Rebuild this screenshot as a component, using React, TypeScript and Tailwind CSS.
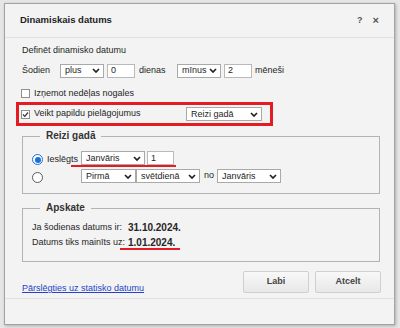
import React from 'react';

const font = { fontFamily: '"Liberation Sans", Arial, sans-serif' };

function Chevron() {
  return (
    <svg width="8" height="5" viewBox="0 0 8 5" className="shrink-0">
      <path d="M1 1l3 3 3-3" fill="none" stroke="#222" strokeWidth="1.7" />
    </svg>
  );
}

function Select({ value, className }: { value: string; className: string }) {
  return (
    <div
      className={`flex items-center justify-between h-[14px] border border-[#a9a9a9] bg-white pl-[4px] pr-[3px] ${className}`}
    >
      <span className="leading-none">{value}</span>
      <Chevron />
    </div>
  );
}

function Input({ value, className }: { value: string; className: string }) {
  return (
    <div
      className={`flex items-center h-[14px] border border-[#b9b9b9] bg-white px-[3px] ${className}`}
    >
      <span className="leading-none">{value}</span>
    </div>
  );
}

function Checkbox({ checked }: { checked?: boolean }) {
  return (
    <div className="w-[9px] h-[9px] border border-[#8f8f8f] bg-white flex items-center justify-center shrink-0">
      {checked && (
        <svg width="7" height="7" viewBox="0 0 7 7">
          <path d="M1 3.5l1.8 1.8L6 1.5" fill="none" stroke="#333" strokeWidth="1.2" />
        </svg>
      )}
    </div>
  );
}

function Radio({ checked }: { checked?: boolean }) {
  return checked ? (
    <div className="w-[11px] h-[11px] rounded-full border border-[#1a6fd9] bg-white flex items-center justify-center shrink-0">
      <div className="w-[6px] h-[6px] rounded-full bg-[#1a6fd9]" />
    </div>
  ) : (
    <div className="w-[11px] h-[11px] rounded-full border border-[#5a5a5a] bg-white shrink-0" />
  );
}

export default function App() {
  return (
    <div
      className="w-[400px] h-[328px] bg-[#e6e6e6] pl-[4px] pt-[3px] overflow-hidden text-[9px] text-[#262626]"
      style={font}
    >
      <div className="w-[391px] h-[322px] border border-[#a3a3a3] bg-[#f3f3f3] shadow-[1px_1px_3px_rgba(0,0,0,0.25)] flex flex-col">
        {/* Header */}
        <div className="h-[34px] shrink-0 border-b border-[#e0e0e0] flex items-center pl-[15px] pr-[15px]">
          <span className="font-bold text-[9.5px] text-[#222]">Dinamiskais datums</span>
          <div className="ml-auto flex items-center gap-[10px] text-[#555] font-bold">
            <span className="text-[9px]">?</span>
            <span className="text-[11px] leading-none">×</span>
          </div>
        </div>

        {/* Body */}
        <div className="h-[260px] shrink-0 pl-[17px] flex flex-col">
          <div className="h-[25px] leading-[25px]">Definēt dinamisko datumu</div>

          <div className="h-[15px] flex items-center">
            <span className="w-[38px]">Šodien</span>
            <Select value="plus" className="w-[44px]" />
            <Input value="0" className="ml-[3px] w-[28px]" />
            <span className="ml-[4px] w-[38px]">dienas</span>
            <Select value="mīnus" className="w-[44px]" />
            <Input value="2" className="ml-[3px] w-[28px]" />
            <span className="ml-[3px]">mēneši</span>
          </div>

          <div className="mt-[7px] h-[17px] flex items-center -ml-[1px] gap-[4px]">
            <Checkbox />
            <span>Izņemot nedēļas nogales</span>
          </div>

          <div className="h-[24px] w-[257px] -ml-[6px] border-[3px] border-[#e31b23] flex items-center pl-[2px]">
            <Checkbox checked />
            <span className="ml-[4px] w-[152px]">Veikt papildu pielāgojumus</span>
            <Select value="Reizi gadā" className="w-[76px]" />
          </div>

          <fieldset className="mt-[3px] w-[358px] border border-[#b3b3b3] pl-[9px] pb-[10px]">
            <legend className="ml-[8px] px-[6px] font-bold text-[10px] leading-[14px] text-[#333]">
              Reizi gadā
            </legend>
            <div className="relative mt-[8px] h-[14px] flex items-end">
              <Radio checked />
              <span className="ml-[4px] w-[34px] leading-[12px]">Ieslēgts</span>
              <Select value="Janvāris" className="w-[64px]" />
              <Input value="1" className="ml-[2px] w-[27px]" />
              <div className="absolute left-[39px] top-[14px] w-[105px] h-[2px] bg-[#e31b23]" />
            </div>
            <div className="mt-[4px] h-[14px] flex items-end">
              <Radio />
              <span className="ml-[4px] w-[34px]" />
              <Select value="Pirmā" className="w-[55px]" />
              <Select value="svētdienā" className="w-[64px]" />
              <span className="ml-[4px] w-[13px] self-center">no</span>
              <Select value="Janvāris" className="w-[64px]" />
            </div>
          </fieldset>

          <fieldset className="mt-[7px] w-[358px] border border-[#b3b3b3] pl-[9px] pb-[11px]">
            <legend className="ml-[8px] px-[6px] font-bold text-[10px] leading-[14px] text-[#333]">
              Apskate
            </legend>
            <div className="mt-[5px] h-[15px] flex items-center">
              <span className="w-[96px]">Ja šodienas datums ir:</span>
              <span className="font-bold text-[10px]">31.10.2024.</span>
            </div>
            <div className="relative h-[15px] flex items-center">
              <span className="w-[96px]">Datums tiks mainīts uz:</span>
              <span className="font-bold text-[10px]">1.01.2024.</span>
              <div className="absolute left-[88px] top-[13px] w-[60px] h-[2px] bg-[#e31b23]" />
            </div>
          </fieldset>

          <div className="mt-[9px] w-[359px] flex items-start">
            <a className="mt-[10px] leading-[14px] text-[#2443c9] underline">
              Pārslēgties uz statisko datumu
            </a>
            <div className="ml-auto flex gap-[6px]">
              <button className="w-[66px] h-[22px] rounded-[2px] border border-[#d0d0d0] bg-gradient-to-b from-[#f8f8f8] to-[#e8e8e8] font-bold text-[#444] text-[9px]">
                Labi
              </button>
              <button className="w-[66px] h-[22px] rounded-[2px] border border-[#d0d0d0] bg-gradient-to-b from-[#f8f8f8] to-[#e8e8e8] font-bold text-[#444] text-[9px]">
                Atcelt
              </button>
            </div>
          </div>
        </div>

        {/* Footer */}
        <div className="flex-1 border-t border-[#e0e0e0]" />
      </div>
    </div>
  );
}
